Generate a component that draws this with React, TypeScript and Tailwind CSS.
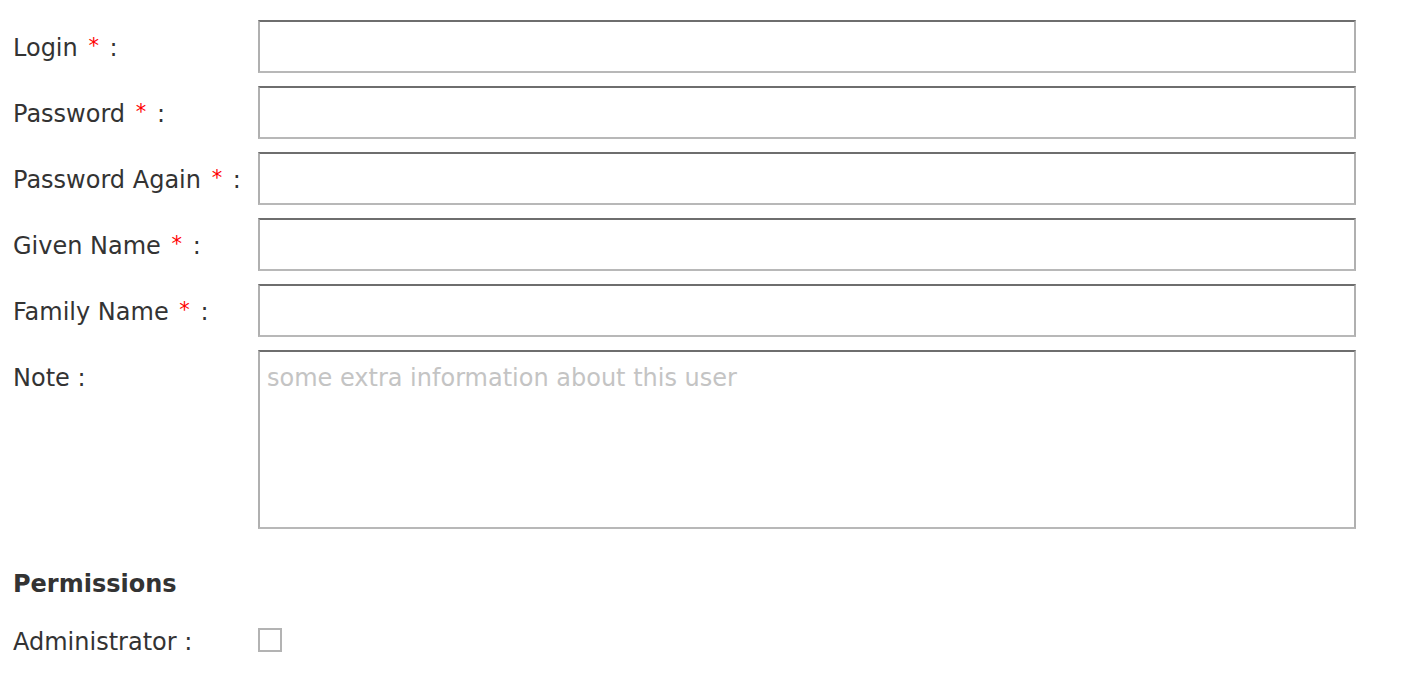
import React from "react";

const fields = [
	{ label: "Login", required: true },
	{ label: "Password", required: true, type: "password" },
	{ label: "Password Again", required: true, type: "password" },
	{ label: "Given Name", required: true },
	{ label: "Family Name", required: true },
];

const boxBorder =
	"border-2 border-t-[#6e6e6e] border-l-[#b0b0b0] border-r-[#b0b0b0] border-b-[#b8b8b8]";

export default function App() {
	return (
		<div className="min-h-screen bg-white pl-[13px] pt-[20px] font-['DejaVu_Sans',sans-serif] text-[24px] leading-[1.2] text-[#333333]">
			<div className="flex flex-col gap-[13px]">
				{fields.map((f, i) => (
					<div key={i} className="flex items-center">
						<label className="w-[245px] shrink-0 whitespace-nowrap pt-[3px]">
							{f.label}
							{f.required && (
								<span className="pl-[4px] pr-[3px] align-[3px] text-[21px] text-[#ff0000]"> *</span>
							)}{" "}
							:
						</label>
						<input
							type={f.type || "text"}
							className={`h-[53px] w-[1098px] bg-white outline-none ${boxBorder}`}
						/>
					</div>
				))}
				<div className="flex items-start">
					<label className="w-[245px] shrink-0 pt-[14px]">Note :</label>
					<textarea
						placeholder="some extra information about this user"
						className={`h-[179px] w-[1098px] resize-none bg-white px-[7px] pt-[12px] leading-[1.2] outline-none placeholder:text-[#c4c4c4] ${boxBorder}`}
					/>
				</div>
			</div>
			<h3 className="mt-[41px] font-bold">Permissions</h3>
			<div className="mt-[29px] flex items-center">
				<label className="w-[245px] shrink-0">Administrator :</label>
				<span className="mb-[4px] block h-[24px] w-[24px] border-2 border-[#b3b3b3] bg-white" />
			</div>
		</div>
	);
}
